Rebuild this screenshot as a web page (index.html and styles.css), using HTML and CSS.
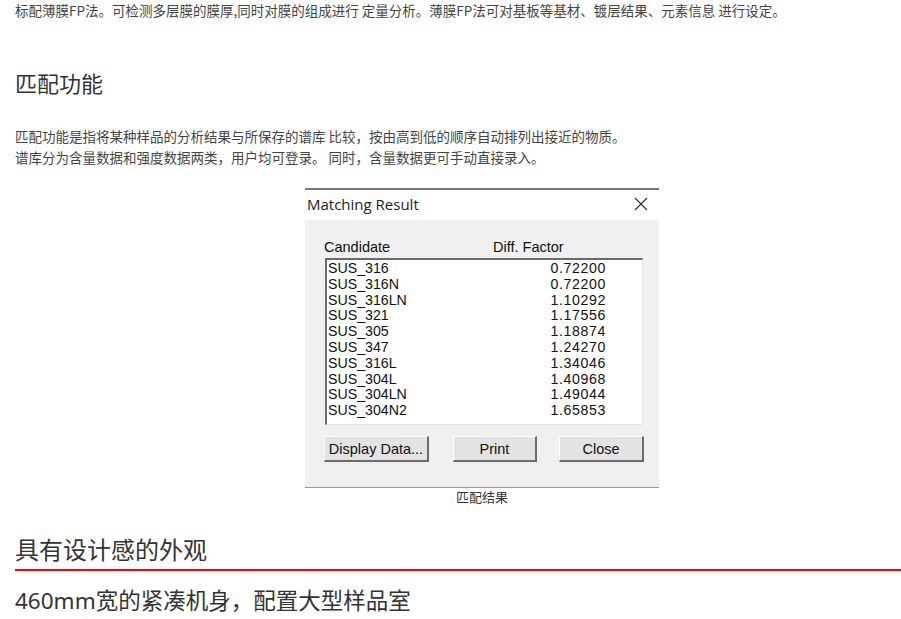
FILE: index.html
```html
<!DOCTYPE html>
<html lang="zh-CN">
<head>
    <meta charset="UTF-8">
    <meta name="viewport" content="width=device-width, initial-scale=1.0">
    <title>匹配功能</title>
    <link rel="stylesheet" href="styles.css">
</head>
<body>
    <div class="content">
        <p class="intro">标配薄膜FP法。可检测多层膜的膜厚,同时对膜的组成进行 定量分析。薄膜FP法可对基板等基材、镀层结果、元素信息 进行设定。</p>

        <h2 class="title">匹配功能</h2>
        <p class="desc">匹配功能是指将某种样品的分析结果与所保存的谱库 比较，按由高到低的顺序自动排列出接近的物质。<br>谱库分为含量数据和强度数据两类，用户均可登录。 同时，含量数据更可手动直接录入。</p>

        <figure class="shot">
            <div class="dialog">
                <div class="dialog-head">
                    <span>Matching Result</span>
                    <svg class="close-x" width="14" height="14" viewBox="0 0 14 14">
                        <path d="M1 1 L13 13 M13 1 L1 13" stroke="#333" stroke-width="1.2" fill="none"/>
                    </svg>
                </div>
                <div class="dialog-body">
                    <div class="cols">
                        <span class="col-name">Candidate</span>
                        <span>Diff. Factor</span>
                    </div>
                    <div class="listbox">
                        <div class="row"><span>SUS_316</span><span>0.72200</span></div>
                        <div class="row"><span>SUS_316N</span><span>0.72200</span></div>
                        <div class="row"><span>SUS_316LN</span><span>1.10292</span></div>
                        <div class="row"><span>SUS_321</span><span>1.17556</span></div>
                        <div class="row"><span>SUS_305</span><span>1.18874</span></div>
                        <div class="row"><span>SUS_347</span><span>1.24270</span></div>
                        <div class="row"><span>SUS_316L</span><span>1.34046</span></div>
                        <div class="row"><span>SUS_304L</span><span>1.40968</span></div>
                        <div class="row"><span>SUS_304LN</span><span>1.49044</span></div>
                        <div class="row"><span>SUS_304N2</span><span>1.65853</span></div>
                    </div>
                    <div class="buttons">
                        <button class="btn btn-data">Display Data...</button>
                        <button class="btn btn-print">Print</button>
                        <button class="btn btn-close">Close</button>
                    </div>
                </div>
            </div>
            <figcaption>匹配结果</figcaption>
        </figure>

        <h2 class="title big">具有设计感的外观</h2>
        <div class="rule"></div>
        <h3 class="title sub">460mm宽的紧凑机身，配置大型样品室</h3>
    </div>
</body>
</html>
```

FILE: styles.css
```css
/* 基础 */
* {
    margin: 0;
    padding: 0;
    box-sizing: border-box;
}

body {
    font-family: "Noto Sans CJK SC", "Noto Sans", sans-serif;
    color: #444;
    background: #fff;
}

.content {
    padding-left: 15px;
}

.intro {
    font-size: 13.5px;
    line-height: 21px;
}

/* 标题 */
.title {
    font-weight: normal;
    color: #333;
    font-size: 22px;
    line-height: 32px;
    margin-top: 45px;
}

.title.big {
    font-size: 24px;
    line-height: 34px;
    margin-top: 27px;
    padding-bottom: 3px;
}

/* 红色分隔线 */
.rule {
    height: 2px;
    background-color: #ff0000;
}

.title.sub {
    font-family: "Noto Sans", "Noto Sans CJK SC", sans-serif;
    font-size: 22.5px;
    line-height: 34px;
    margin-top: 13px;
}

.desc {
    font-size: 13.5px;
    line-height: 21px;
    margin-top: 28px;
}

/* 截图 */
.shot {
    margin-top: 20px;
    padding-left: 48px;
    display: flex;
    flex-direction: column;
    align-items: center;
}

.shot figcaption {
    font-size: 13px;
    line-height: 17px;
    color: #333;
}

.dialog {
    width: 354px;
    height: 300px;
    border-top: 2px solid #777;
    border-bottom: 1px solid #999;
    display: flex;
    flex-direction: column;
    font-family: "Liberation Sans", Arial, sans-serif;
    color: #111;
}

.dialog-head {
    height: 30px;
    background: #fff;
    display: flex;
    align-items: center;
    justify-content: space-between;
    padding: 0 11px 3px 2px;
    font-family: "Open Sans", "Noto Sans", sans-serif;
    font-size: 15px;
    color: #222;
}

.close-x {
    display: block;
}

.dialog-body {
    flex: 1;
    background: #f0f0f0;
    padding: 19px 0 0 19px;
    font-size: 14.5px;
}

.cols {
    display: flex;
    line-height: 16px;
    margin-bottom: 3px;
}

.col-name {
    width: 169px;
}

.listbox {
    margin-left: 1px;
    width: 318px;
    height: 167px;
    background: #fff;
    border-top: 2px solid #6a6a6a;
    border-left: 2px solid #6a6a6a;
    border-right: 1px solid #e3e3e3;
    border-bottom: 1px solid #e3e3e3;
    padding: 1px 36px 0 1px;
}

.row {
    display: flex;
    justify-content: space-between;
    line-height: 15.8px;
    font-size: 14.2px;
}

.row span:last-child {
    letter-spacing: 0.6px;
}

.buttons {
    display: flex;
    margin-top: 11px;
}

.btn {
    height: 26px;
    background: #e3e3e3;
    border-top: 1px solid #fff;
    border-left: 1px solid #fff;
    border-right: 2px solid #6b6b6b;
    border-bottom: 2px solid #6b6b6b;
    font-family: "Liberation Sans", Arial, sans-serif;
    font-size: 14.5px;
    color: #111;
}

.btn-data {
    width: 105px;
}

.btn-print {
    width: 84px;
    margin-left: 24px;
}

.btn-close {
    width: 85px;
    margin-left: 22px;
}
```
